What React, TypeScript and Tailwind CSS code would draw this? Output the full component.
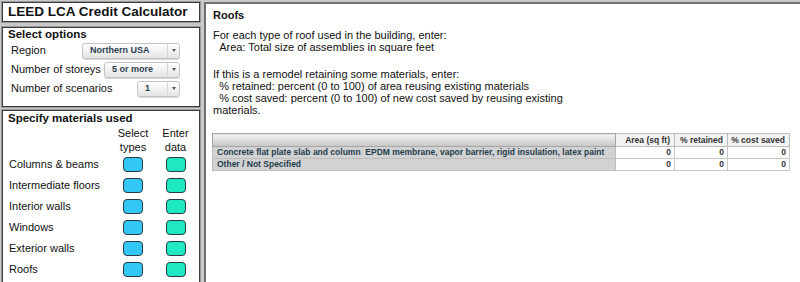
import React from "react";

const font = "[font-family:'Liberation_Sans',Arial,sans-serif]";

function Dropdown({ value, width }: { value: string; width: string }) {
  return (
    <div
      className={`${width} h-[16px] flex rounded-[3px] border border-[#c4c4c4] bg-gradient-to-b from-white to-[#e4e4e4] shadow-[0_1px_0_#d8d8d8]`}
    >
      <div className="flex-1 pl-[7px] flex items-center text-[9px] font-bold text-[#2c3e50] leading-none">
        {value}
      </div>
      <div className="w-[12px] border-l border-[#d6d6d6] flex items-center justify-center">
        <div className="w-0 h-0 border-l-[2.5px] border-r-[2.5px] border-t-[3px] border-l-transparent border-r-transparent border-t-[#555]" />
      </div>
    </div>
  );
}

const materials = [
  "Columns & beams",
  "Intermediate floors",
  "Interior walls",
  "Windows",
  "Exterior walls",
  "Roofs",
];

const rows = [
  "Concrete flat plate slab and column  EPDM membrane, vapor barrier, rigid insulation, latex paint",
  "Other / Not Specified",
];

export default function App() {
  return (
    <div className={`${font} w-[800px] h-[282px] overflow-hidden bg-[#c9c9c9] flex text-[#111]`}>
      {/* left column */}
      <div className="ml-[2px] mt-[2px] w-[198px] shrink-0 flex flex-col">
        <div className="shrink-0 h-[20px] bg-white border border-[#3c3c3c] shadow-[0_0_0_1px_#9a9a9a] flex items-center pl-[5px] text-[13.5px] font-bold leading-none">
          LEED LCA Credit Calculator
        </div>

        <div className="shrink-0 mt-[5px] h-[80px] bg-white border border-[#3c3c3c] shadow-[0_0_0_1px_#9a9a9a]">
          <div className="h-[13px] leading-[13px] pl-[5px] text-[11.5px] font-bold">Select options</div>
          <div className="h-[19px] flex items-center">
            <span className="pl-[8px] text-[11px]">Region</span>
            <div className="ml-auto mr-[19px]">
              <Dropdown value="Northern USA" width="w-[98px]" />
            </div>
          </div>
          <div className="h-[19px] flex items-center">
            <span className="pl-[8px] text-[11px]">Number of storeys</span>
            <div className="ml-auto mr-[19px]">
              <Dropdown value="5 or more" width="w-[76px]" />
            </div>
          </div>
          <div className="h-[19px] flex items-center">
            <span className="pl-[8px] text-[11px]">Number of scenarios</span>
            <div className="ml-auto mr-[19px]">
              <Dropdown value="1" width="w-[43px]" />
            </div>
          </div>
        </div>

        <div className="shrink-0 mt-[3px] h-[200px] bg-white border border-[#3c3c3c] shadow-[0_0_0_1px_#9a9a9a]">
          <div className="h-[14px] leading-[14px] pl-[5px] text-[11.5px] font-bold">Specify materials used</div>
          <div className="pt-[1px] grid grid-cols-[110px_40px_45px] text-[11px] leading-[14px]">
            <div />
            <div className="text-center">
              Select
              <br />
              types
            </div>
            <div className="text-center">
              Enter
              <br />
              data
            </div>
          </div>
          {materials.map((m) => (
            <div key={m} className="grid grid-cols-[110px_40px_45px] h-[21px] items-center text-[11px]">
              <div className="pl-[6px]">{m}</div>
              <div className="flex justify-center">
                <div className="w-[20px] h-[15px] rounded-[4px] border border-[#2b3a44] bg-[#33c7f6]" />
              </div>
              <div className="flex justify-center">
                <div className="w-[20px] h-[15px] rounded-[4px] border border-[#2b3a44] bg-[#1ee9c2]" />
              </div>
            </div>
          ))}
        </div>
      </div>

      {/* right panel */}
      <div className="ml-[4px] mt-[2px] flex-1 h-[300px] shrink-0 bg-white border-t-2 border-l-2 border-[#707070] pl-[6px] pt-[5px]">
        <div className="pl-[1px] text-[11px] font-bold leading-[12px]">Roofs</div>
        <div className="pl-[1px] mt-[8px] w-[360px] text-[11px] leading-[12px] whitespace-pre-wrap">
          {"For each type of roof used in the building, enter:\n  Area: Total size of assemblies in square feet"}
        </div>
        <div className="pl-[1px] mt-[15px] w-[360px] text-[11px] leading-[12px] whitespace-pre-wrap">
          {"If this is a remodel retaining some materials, enter:\n  % retained: percent (0 to 100) of area reusing existing materials\n  % cost saved: percent (0 to 100) of new cost saved by reusing existing materials."}
        </div>

        <table className="mt-[17px] w-[577px] table-fixed border-collapse text-[8.5px] font-bold leading-none">
          <colgroup>
            <col className="w-[403px]" />
            <col className="w-[59px]" />
            <col className="w-[53px]" />
            <col className="w-[62px]" />
          </colgroup>
          <thead>
            <tr className="h-[13px]">
              <th className="border border-[#a6a6a6] bg-gradient-to-b from-[#f4f4f4] to-[#c6c6c6]" />
              <th className="border border-[#bdbdbd] bg-[#f3f3f3] text-right pr-[4px] text-[#333]">Area (sq ft)</th>
              <th className="border border-[#bdbdbd] bg-[#f3f3f3] text-right pr-[4px] text-[#333]">% retained</th>
              <th className="border border-[#bdbdbd] bg-[#f3f3f3] text-right pr-[4px] text-[#333]">% cost saved</th>
            </tr>
          </thead>
          <tbody>
            {rows.map((r) => (
              <tr key={r} className="h-[12px]">
                <td className="border border-[#bdbdbd] bg-[#d2d2d2] pl-[4px] text-[#1e3d4c] whitespace-pre overflow-hidden">
                  {r}
                </td>
                <td className="border border-[#c8c8c8] bg-white text-right pr-[3px] text-[#333]">0</td>
                <td className="border border-[#c8c8c8] bg-white text-right pr-[3px] text-[#333]">0</td>
                <td className="border border-[#c8c8c8] bg-white text-right pr-[3px] text-[#333]">0</td>
              </tr>
            ))}
          </tbody>
        </table>
      </div>
    </div>
  );
}
